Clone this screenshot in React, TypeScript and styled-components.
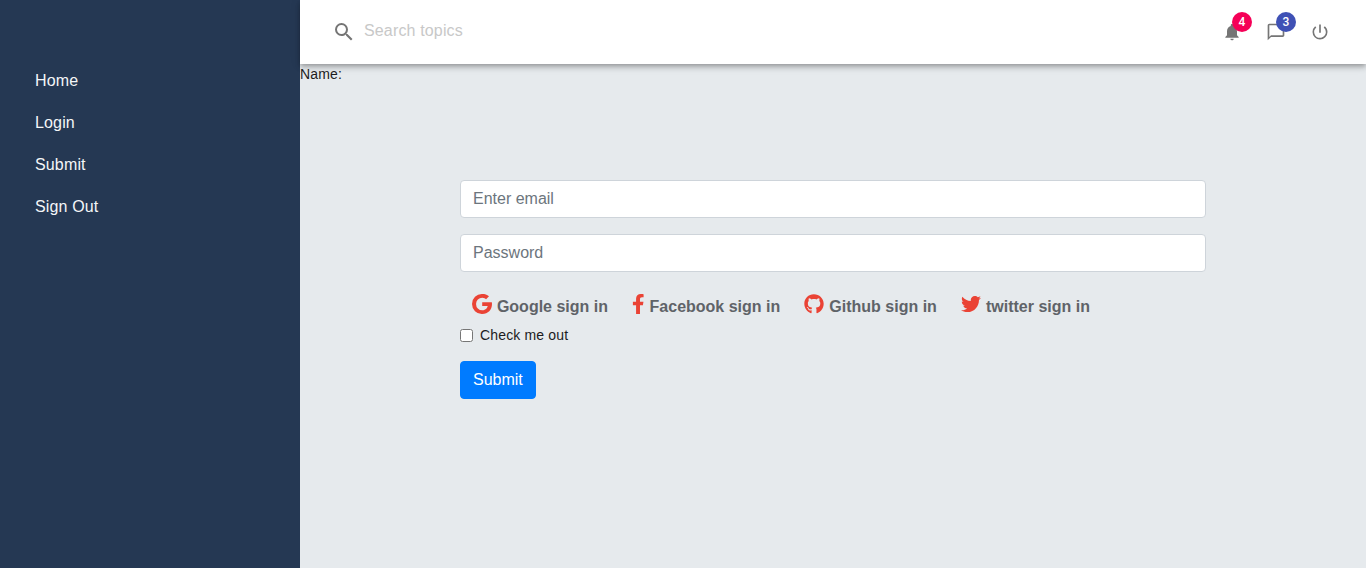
import React from "react";
import styled, { createGlobalStyle } from "styled-components";
import { FaFacebookF, FaGithub, FaTwitter } from "react-icons/fa";
import {
  MdNotifications,
  MdOutlineChatBubbleOutline,
  MdPowerSettingsNew,
  MdSearch,
} from "react-icons/md";

const GlobalStyle = createGlobalStyle`
  *, *::before, *::after { box-sizing: border-box; }
  body {
    margin: 0;
    background: #e6eaed;
    color: #1c1c1e;
    font-family: Arial, "Liberation Sans", sans-serif;
    font-size: 14px;
    line-height: 1.43;
    letter-spacing: 0.01071em;
  }
`;

const Layout = styled.div`
  display: flex;
  min-height: 100vh;
`;

const Sidebar = styled.nav`
  flex: 0 0 300px;
  padding: 60px 25px 0;
  background: #253853;
`;

const NavLink = styled.a`
  display: block;
  height: 42px;
  padding-left: 10px;
  color: #f4f6f8;
  font-size: 16px;
  line-height: 42px;
  letter-spacing: 0.15px;
  text-decoration: none;
`;

const Content = styled.div`
  flex: 1;
  min-width: 0;
`;

const Header = styled.header`
  display: flex;
  align-items: center;
  height: 64px;
  padding: 0 36px 0 32px;
  background: #fff;
  box-shadow:
    0 2px 4px -1px rgba(0, 0, 0, 0.2),
    0 4px 5px 0 rgba(0, 0, 0, 0.14),
    0 1px 10px 0 rgba(0, 0, 0, 0.12);
`;

const SearchIcon = styled(MdSearch)`
  width: 24px;
  height: 24px;
  margin-right: 8px;
  color: #757575;
`;

const SearchInput = styled.input`
  width: 300px;
  height: 30px;
  margin-bottom: 3px;
  padding: 0;
  border: 0;
  outline: 0;
  font: 16px Arial, "Liberation Sans", sans-serif;
  letter-spacing: 0.15px;
  &::placeholder { color: #c8c8c8; opacity: 1; }
`;

const Actions = styled.div`
  display: flex;
  gap: 24px;
  margin-left: auto;
`;

const ActionButton = styled.button`
  position: relative;
  display: flex;
  width: 20px;
  height: 20px;
  padding: 0;
  border: 0;
  background: none;
  color: #757575;
  font-size: 20px;
`;

const Badge = styled.span<{ $color: string }>`
  position: absolute;
  top: -10px;
  right: -10px;
  width: 20px;
  height: 20px;
  border-radius: 10px;
  background: ${({ $color }) => $color};
  color: #fff;
  font: 500 12px/20px Roboto, sans-serif;
  text-align: center;
`;

const NameLine = styled.div`
  height: 20px;
`;

const LoginForm = styled.form`
  padding: 96px 160px 0;
`;

const Field = styled.input`
  display: block;
  width: 100%;
  height: 38px;
  margin-bottom: 16px;
  padding: 6px 12px;
  border: 1px solid #ced4da;
  border-radius: 4px;
  background: #fff;
  font: 16px/24px Arial, "Liberation Sans", sans-serif;
  &::placeholder { color: #6c757d; opacity: 1; }
`;

const Providers = styled.div`
  display: flex;
  gap: 24.2px;
  height: 37px;
  padding: 6px 12px;
`;

const Provider = styled.a<{ $iconWidth: number }>`
  display: flex;
  align-items: flex-start;
  color: #5f6368;
  font-size: 16px;
  font-weight: 700;
  line-height: 24px;
  letter-spacing: normal;
  text-decoration: none;
  white-space: nowrap;
  span { padding-top: 1px; }
  svg {
    flex: none;
    width: ${({ $iconWidth }) => $iconWidth}px;
    height: 20px;
    margin-right: 4.9px;
    color: #ea4335;
  }
`;

const CheckRow = styled.label`
  display: flex;
  align-items: center;
  height: 20px;
  margin: 0 0 16px;
  input { width: 13px; height: 13px; margin: 1px 7px 0 0; }
`;

const SubmitButton = styled.button`
  height: 38px;
  padding: 6px 12px;
  border: 1px solid #007bff;
  border-radius: 4px;
  background: #007bff;
  color: #fff;
  font: 16px/24px Arial, "Liberation Sans", sans-serif;
`;

const GoogleIcon = () => (
  <svg viewBox="0 0 24 24" fill="currentColor">
    <path d="M12.24 9.82v4.66h6.6c-.27 1.75-2.02 5.12-6.6 5.12A7.45 7.45 0 0 1 4.9 12a7.45 7.45 0 0 1 7.34-7.6c2.26 0 3.77.96 4.63 1.79l3.53-3.39C18.1.68 15.4 0 12.24 0A12 12 0 0 0 0 12a12 12 0 0 0 12.24 12C19.3 24 24 19.04 24 12.04c0-.94-.1-1.65-.23-2.22Z" />
  </svg>
);

const links = ["Home", "Login", "Submit", "Sign Out"];

const providers = [
  { label: "Google sign in", Icon: GoogleIcon, width: 20 },
  { label: "Facebook sign in", Icon: FaFacebookF, width: 12.5 },
  { label: "Github sign in", Icon: FaGithub, width: 20 },
  { label: "twitter sign in", Icon: FaTwitter, width: 20 },
];

export default function App() {
  return (
    <>
      <GlobalStyle />
      <Layout>
        <Sidebar>
          {links.map((link) => (
            <NavLink key={link} href="#">{link}</NavLink>
          ))}
        </Sidebar>
        <Content>
          <Header>
            <SearchIcon />
            <SearchInput placeholder="Search topics" />
            <Actions>
              <ActionButton>
                <MdNotifications />
                <Badge $color="#f50057">4</Badge>
              </ActionButton>
              <ActionButton>
                <MdOutlineChatBubbleOutline />
                <Badge $color="#3f51b5">3</Badge>
              </ActionButton>
              <ActionButton>
                <MdPowerSettingsNew />
              </ActionButton>
            </Actions>
          </Header>
          <NameLine>Name:</NameLine>
          <LoginForm>
            <Field type="email" placeholder="Enter email" />
            <Field type="password" placeholder="Password" />
            <Providers>
              {providers.map(({ label, Icon, width }) => (
                <Provider key={label} href="#" $iconWidth={width}>
                  <Icon />
                  <span>{label}</span>
                </Provider>
              ))}
            </Providers>
            <CheckRow>
              <input type="checkbox" />
              Check me out
            </CheckRow>
            <SubmitButton type="button">Submit</SubmitButton>
          </LoginForm>
        </Content>
      </Layout>
    </>
  );
}
